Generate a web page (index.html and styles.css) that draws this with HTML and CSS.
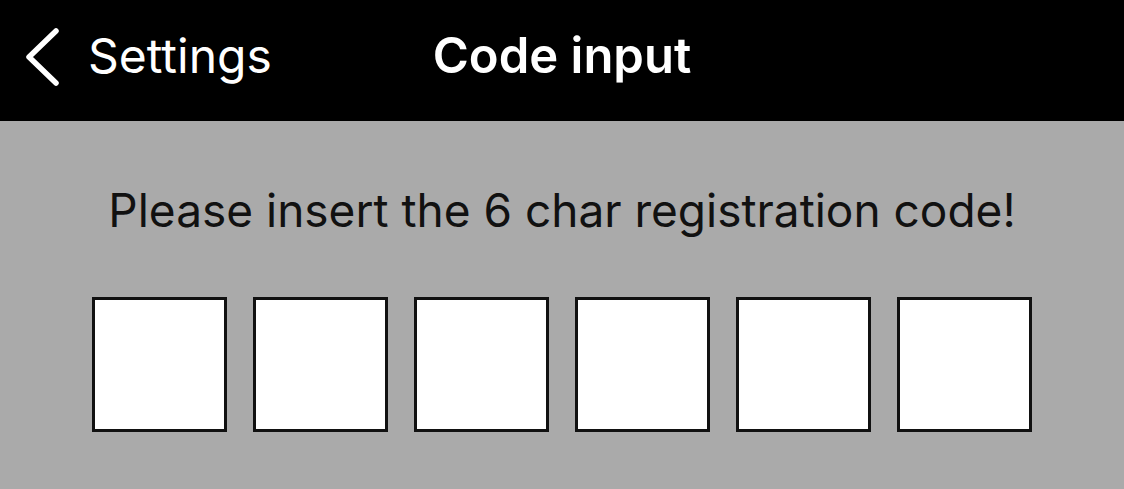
FILE: index.html
```html
<!DOCTYPE html>
<html lang="en">
<head>
    <meta charset="UTF-8">
    <title>Code input</title>
    <link rel="stylesheet" href="styles.css">
</head>
<body>
    <div class="navbar">
        <a class="back" href="#">
            <svg class="chevron" width="36" height="58" viewBox="0 0 36 58"><path d="M31 3 L4 29 L31 55" fill="none" stroke="#fff" stroke-width="5.5" stroke-linecap="round" stroke-linejoin="round"/></svg>
            <span>Settings</span>
        </a>
        <div class="title">Code input</div>
        <div></div>
    </div>
    <div class="content">
        <p class="hint">Please insert the 6 char registration code!</p>
        <div class="boxes">
            <input class="box" maxlength="1"><input class="box" maxlength="1"><input class="box" maxlength="1"><input class="box" maxlength="1"><input class="box" maxlength="1"><input class="box" maxlength="1">
        </div>
    </div>
</body>
</html>
```
FILE: styles.css
```css
* { margin: 0; padding: 0; box-sizing: border-box; }
html, body { height: 100%; }
body { background: #aaaaaa; font-family: Inter, "Noto Sans", sans-serif; overflow: hidden; }
.navbar { height: 121px; padding-bottom: 10px; background: #000; color: #fff; display: grid; grid-template-columns: 1fr auto 1fr; align-items: center; }
.back { display: flex; align-items: center; color: #fff; text-decoration: none; font-size: 48px; padding-left: 25px; }
.chevron { margin-right: 27px; margin-top: 2px; }
.title { font-size: 49px; font-weight: 600; }
.content { padding-top: 61px; text-align: center; }
.hint { font-size: 46px; color: #111; line-height: 56px; }
.boxes { display: flex; justify-content: center; gap: 26px; margin-top: 59px; }
.box { width: 135px; height: 135px; border: 3px solid #111; background: #fff; outline: none; }
```
